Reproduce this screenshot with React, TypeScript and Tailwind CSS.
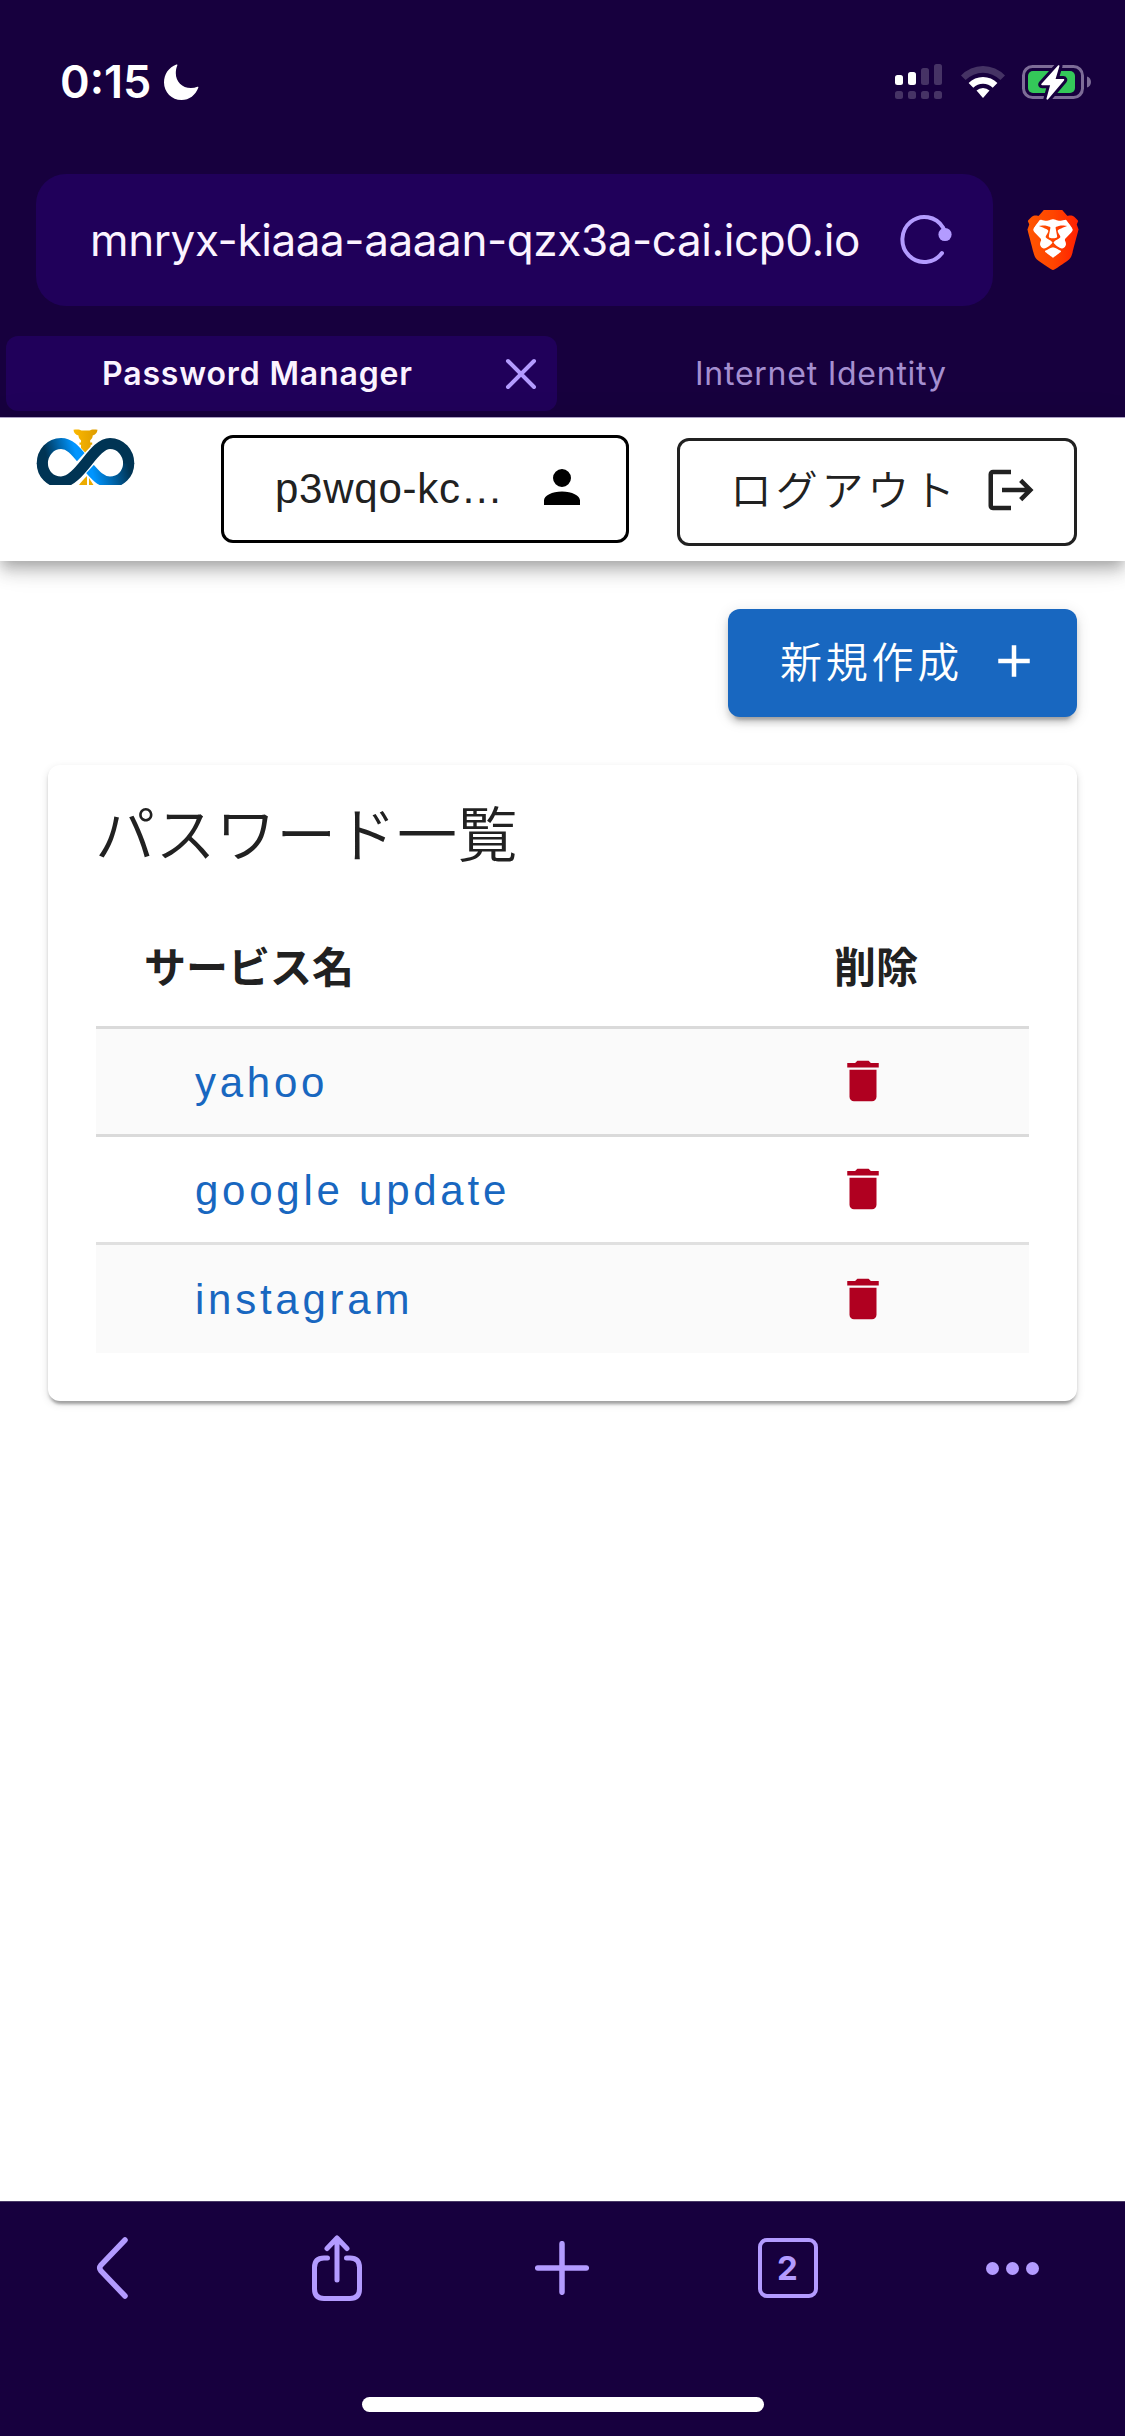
import type { ReactNode } from "react";
import { SiBrave } from "react-icons/si";

const services = [
  { name: "yahoo", row: "h-[108px] bg-[#fafafa] border-[#dadada]", icon: "-mt-[2px]" },
  { name: "google update", row: "h-[108px] bg-white border-[#dadada]", icon: "-mt-[2px]" },
  { name: "instagram", row: "h-[111px] bg-[#fafafa] border-[#e0e0e0]", icon: "-mt-px" },
];

function MoonIcon() {
  return (
    <svg className="h-9 w-[35px] fill-white" viewBox="0 0 35 36">
      <path d="M12.4.6c.7-.3 1.2.2.9.9C12.300 3.800 11.800 6.300 11.800 9c0 8.700 6.200 15 15.200 15 2.300 0 4.500-.4 6.400-1.200.7-.3 1.200.2.9.9C31.600 31 25.200 36 17.600 36 7.700 36 0 28.300 0 18.500 0 10.300 5 3.200 12.400.6z" />
    </svg>
  );
}

function SignalIcon() {
  return (
    <svg className="h-[35px] w-[47px] fill-white" viewBox="0 0 47 35">
      <rect x="0" y="11" width="8" height="10" rx="2.500" />
      <rect x="13" y="8" width="8" height="13" rx="2.500" />
      <g opacity=".2">
        <rect x="26" y="4" width="8" height="17" rx="2.500" />
        <rect x="39" y="0" width="8" height="21" rx="2.500" />
        <rect x="0" y="27" width="8" height="8" rx="2.500" />
        <rect x="13" y="27" width="8" height="8" rx="2.500" />
        <rect x="26" y="27" width="8" height="8" rx="2.500" />
        <rect x="39" y="27" width="8" height="8" rx="2.500" />
      </g>
    </svg>
  );
}

function WifiIcon() {
  return (
    <svg className="h-[35px] w-[46px] fill-white" viewBox="0 0 46 35">
      <path opacity=".2" d="M1 11.500A30 30 0 0 1 45 11.500L40.400 16A24.500 24.500 0 0 0 5.600 16Z" />
      <path d="M8.600 19A20 20 0 0 1 37.400 19L32.700 23.700A13.800 13.800 0 0 0 13.300 23.700Z" />
      <path d="M16.500 26.600A9.500 9.500 0 0 1 29.500 26.600L23 34Z" />
    </svg>
  );
}

function BatteryIcon() {
  return (
    <svg className="h-9 w-[69px]" viewBox="0 0 69 36">
      <rect x="1.500" y="2.500" width="59" height="31" rx="9" fill="none" stroke="#7d6c97" strokeWidth="3" />
      <rect x="6" y="7" width="47" height="22" rx="5" fill="#34c759" />
      <path d="M65 12.500c2.500.8 4 3 4 5.500s-1.500 4.700-4 5.500z" fill="#7d6c97" />
      <path
        d="M36 1.500 19.500 19.800c-.6.800-.2 1.400.6 1.400h8L24.500 34.500c-.3 1 .9 1.500 1.600.8L42 16.500c.6-.8.2-1.400-.6-1.400h-7.800L37.400 2.300c.3-1-.7-1.500-1.400-.8z"
        fill="#fff"
        stroke="#17003e"
        strokeWidth="6"
        strokeLinejoin="round"
        paintOrder="stroke"
      />
    </svg>
  );
}

function ReloadIcon() {
  return (
    <svg className="h-[50px] w-[52px]" viewBox="0 0 52 50">
      <path d="M42 39A22 22.500 0 1 1 43 13.500L45 19" fill="none" stroke="#b39bff" strokeWidth="4" strokeLinecap="round" />
      <circle cx="45" cy="20.500" r="6.600" fill="#b39bff" />
    </svg>
  );
}

function BraveIcon() {
  return (
    <div className="relative size-[60px]">
      <svg className="absolute inset-0 size-[60px]" viewBox="0 0 60 60">
        <defs>
          <linearGradient id="brave" x1="0" x2="1" y1="0" y2="0">
            <stop offset="0" stopColor="#ff5601" />
            <stop offset=".5" stopColor="#ff4500" />
            <stop offset="1" stopColor="#ff1f01" />
          </linearGradient>
        </defs>
        <path d="M17 8h26l8 12-7 22-14 10-14-10L9 20z" fill="#fff" />
      </svg>
      <SiBrave className="relative size-[60px]" fill="url(#brave)" />
    </div>
  );
}

function InfinityLogo() {
  return (
    <svg className="h-14 w-[100px]" viewBox="0 0 100 56">
      <defs>
        <linearGradient id="loopLeft" gradientUnits="userSpaceOnUse" x1="8" y1="34" x2="46" y2="24">
          <stop offset=".1" stopColor="#003454" />
          <stop offset=".85" stopColor="#0095ff" />
        </linearGradient>
        <linearGradient id="loopRight" gradientUnits="userSpaceOnUse" x1="52" y1="44" x2="94" y2="34">
          <stop offset=".1" stopColor="#0095ff" />
          <stop offset=".95" stopColor="#003454" />
        </linearGradient>
        <linearGradient id="gold" x1="0" x2="1" y1="0" y2="0">
          <stop offset="0" stopColor="#fbb800" />
          <stop offset="1" stopColor="#dd9c00" />
        </linearGradient>
      </defs>
      <path d="M37.500.8c3.500-.6 6.500-.5 8 .8h8c1.500-1.300 4.500-1.400 8-.8-.3 3.200-2.200 5-4.800 5.800 0 2.200-1 3.700-2.500 4.600v2.300h2v2.200h-1.500v4.500L50 24.500 45 19v-3.300h-1.500v-2.200H45v-2.300c-1.500-.9-2.500-2.400-2.500-4.600C39.600 5.800 37.800 4 37.500.8z" fill="url(#gold)" />
      <path d="M51 47v9h-8c1.500-2.500 5-6 8-9zM53 49l4.500 7H53z" fill="#ecab00" />
      <path d="M6.300 34.500C6.300 23.500 14.500 14.500 25 14.500 34 14.500 39 21 49.300 33.500" fill="none" stroke="url(#loopLeft)" strokeWidth="11.200" />
      <path d="M49.300 34.500C60 47 65 53 74 53 84.500 53 92.700 45 92.700 34" fill="none" stroke="url(#loopRight)" strokeWidth="11.200" />
      <path d="M62 20.500 36 48.500" stroke="#fff" strokeWidth="15" />
      <path d="M92.700 34.500C92.700 23.500 84.500 14.500 74 14.500 57 14.500 44 53 25 53 14.500 53 6.300 45 6.300 34" fill="none" stroke="#003454" strokeWidth="11.200" />
    </svg>
  );
}

function MaterialIcon({ d, className }: { d: string; className: string }) {
  return (
    <svg className={`size-[54px] shrink-0 fill-current ${className}`} viewBox="0 0 24 24">
      <path d={d} />
    </svg>
  );
}

function ToolCell({ children }: { children: ReactNode }) {
  return <button className="flex h-[132px] items-center justify-center">{children}</button>;
}

export default function App() {
  return (
    <div className="flex h-[2436px] w-[1125px] flex-col overflow-hidden bg-white font-['Inter','Noto_Sans_CJK_JP',sans-serif]">
      <header className="flex h-[418px] shrink-0 flex-col border-b border-[#b7a9cf] bg-[#17003e]">
        <div className="flex h-[163px] items-center justify-between pr-[34px] pl-[60px]">
          <div className="flex items-center gap-[13px]">
            <span className="text-[45px] leading-none font-semibold text-white">0:15</span>
            <MoonIcon />
          </div>
          <div className="flex items-center">
            <SignalIcon />
            <div className="mr-4 ml-[18px] flex">
              <WifiIcon />
            </div>
            <BatteryIcon />
          </div>
        </div>

        <div className="mt-[11px] flex items-center pl-9">
          <div className="flex h-[132px] w-[957px] items-center justify-between rounded-[30px] bg-[#20005a] pr-[41px] pl-[54px]">
            <span className="text-[44px] leading-none tracking-[-0.4px] whitespace-nowrap text-[#fbf3ff]">
              mnryx-kiaaa-aaaan-qzx3a-cai.icp0.io
            </span>
            <div className="-mt-[2px]">
              <ReloadIcon />
            </div>
          </div>
          <div className="ml-[30px]">
            <BraveIcon />
          </div>
        </div>

        <nav className="mt-[30px] flex h-[75px] pl-[6px]">
          <div className="flex w-[551px] items-center justify-between rounded-xl bg-[#20005a] pr-5 pl-[96px]">
            <span className="text-[32px] leading-none font-semibold tracking-[0.85px] text-[#fbf3ff]">
              Password Manager
            </span>
            <svg className="size-8" viewBox="0 0 32 32">
              <path d="M3 3l26 26M29 3 3 29" stroke="#b39bff" strokeWidth="4" strokeLinecap="round" />
            </svg>
          </div>
          <div className="flex items-center pl-[138px]">
            <span className="text-[32px] leading-none tracking-[0.75px] text-[#a58fd0]">Internet Identity</span>
          </div>
        </nav>
      </header>

      <div className="z-10 flex h-[143px] shrink-0 items-start bg-white pl-9 text-[42px] leading-none text-[#212121] shadow-[0_6px_12px_-3px_rgba(0,0,0,0.2),0_12px_15px_0_rgba(0,0,0,0.14),0_3px_30px_0_rgba(0,0,0,0.12)]">
        <div className="mt-[11px]">
          <InfinityLogo />
        </div>
        <div className="mt-[17px] ml-[85px] flex h-[108px] w-[408px] items-center justify-between rounded-xl border-[3px] border-black pr-[37px] pl-[51px]">
          <span className="font-['Liberation_Sans',sans-serif] tracking-[0.75px]">p3wqo-kc…</span>
          <MaterialIcon
            className="-mt-[5px] text-black"
            d="M12 4a4 4 0 1 1 0 8 4 4 0 0 1 0-8m0 10c4.420 0 8 1.790 8 4v2H4v-2c0-2.210 3.580-4 8-4Z"
          />
        </div>
        <button className="mt-5 ml-12 flex h-[108px] w-[400px] items-center justify-between rounded-xl border-[3px] border-[#212121] pr-9 pl-[50px]">
          <span className="-mt-[2px] font-[350] tracking-[3.75px]">ログアウト</span>
          <MaterialIcon
            className="-mt-[5px]"
            d="M17 7l-1.410 1.410L18.170 11H8v2h10.170l-2.580 2.580L17 17l5-5M4 5h8V3H4c-1.100 0-2 .9-2 2v14c0 1.100.9 2 2 2h8v-2H4V5Z"
          />
        </button>
      </div>

      <main className="flex flex-1 flex-col px-12 pt-12 text-[42px] text-[#212121]">
        <button className="flex h-[108px] w-[349px] items-center justify-between self-end rounded-xl bg-[#1867c0] pr-9 pl-[52px] leading-none text-white shadow-[0_9px_3px_-6px_rgba(0,0,0,0.2),0_6px_6px_0_rgba(0,0,0,0.14),0_3px_15px_0_rgba(0,0,0,0.12)]">
          <span className="-mt-px font-[350] tracking-[3.75px]">新規作成</span>
          <MaterialIcon className="-mt-[4px]" d="M19 13h-6v6h-2v-6H5v-2h6V5h2v6h6v2Z" />
        </button>

        <section className="mt-12 h-[636px] rounded-xl bg-white px-12 shadow-[0_6px_3px_-3px_rgba(0,0,0,0.2),0_3px_3px_0_rgba(0,0,0,0.14),0_3px_9px_0_rgba(0,0,0,0.12)]">
          <h1 className="-ml-px h-[138px] text-[60px] leading-[140px] font-[350] tracking-[0.4px]">パスワード一覧</h1>
          <div className="grid h-[123px] grid-cols-[690px_1fr] leading-[129px] font-bold">
            <span className="pl-12">サービス名</span>
            <span className="pl-12">削除</span>
          </div>
          {services.map((service) => (
            <div
              key={service.name}
              className={`grid grid-cols-[690px_1fr] items-center border-t-[3px] ${service.row}`}
            >
              <a className="pt-[2px] pl-[99px] font-['Liberation_Sans',sans-serif] leading-none tracking-[3.75px] text-[#1867c0]">
                {service.name}
              </a>
              <button className={`pl-[50px] text-[#b00020] ${service.icon}`}>
                <MaterialIcon
                  className="block"
                  d="M19 4h-3.500l-1-1h-5l-1 1H5v2h14M6 19a2 2 0 0 0 2 2h8a2 2 0 0 0 2-2V7H6v12Z"
                />
              </button>
            </div>
          ))}
        </section>
      </main>

      <footer className="flex h-[235px] shrink-0 flex-col border-t border-[#4a3a66] bg-[#17003e]">
        <div className="grid grid-cols-5">
          <ToolCell>
            <svg className="mr-[2px] h-[62px] w-8" viewBox="0 0 32 62" fill="none">
              <path d="M29 3 5 28q-2.500 3 0 6L29 59" stroke="#b39bff" strokeWidth="5.500" strokeLinecap="round" />
            </svg>
          </ToolCell>
          <ToolCell>
            <svg className="mr-[2px] h-[66px] w-[50px]" viewBox="0 0 50 66" fill="none">
              <path
                d="M15.500 23H12q-9.500 0-9.500 9.500V54q0 9.500 9.500 9.500h26q9.500 0 9.500-9.500V32.500Q47.500 23 38 23h-3.500M25 4v41M15 13.500 25 3l10 10.500"
                stroke="#b39bff"
                strokeWidth="5"
                strokeLinecap="round"
                strokeLinejoin="round"
              />
            </svg>
          </ToolCell>
          <ToolCell>
            <svg className="mr-px size-[54px]" viewBox="0 0 54 54">
              <path d="M27 2.700v48.600M2.700 27h48.600" stroke="#b39bff" strokeWidth="5.500" strokeLinecap="round" />
            </svg>
          </ToolCell>
          <ToolCell>
            <span className="flex size-[60px] items-center justify-center rounded-[9px] border-4 border-[#b39bff] text-[33px] leading-none font-bold text-[#b39bff]">
              2
            </span>
          </ToolCell>
          <ToolCell>
            <span className="flex gap-[7px]">
              <i className="size-[13px] rounded-full bg-[#b39bff]" />
              <i className="size-[13px] rounded-full bg-[#b39bff]" />
              <i className="size-[13px] rounded-full bg-[#b39bff]" />
            </span>
          </ToolCell>
        </div>
        <div className="mt-[63px] h-[15px] w-[402px] self-center rounded-full bg-white" />
      </footer>
    </div>
  );
}
